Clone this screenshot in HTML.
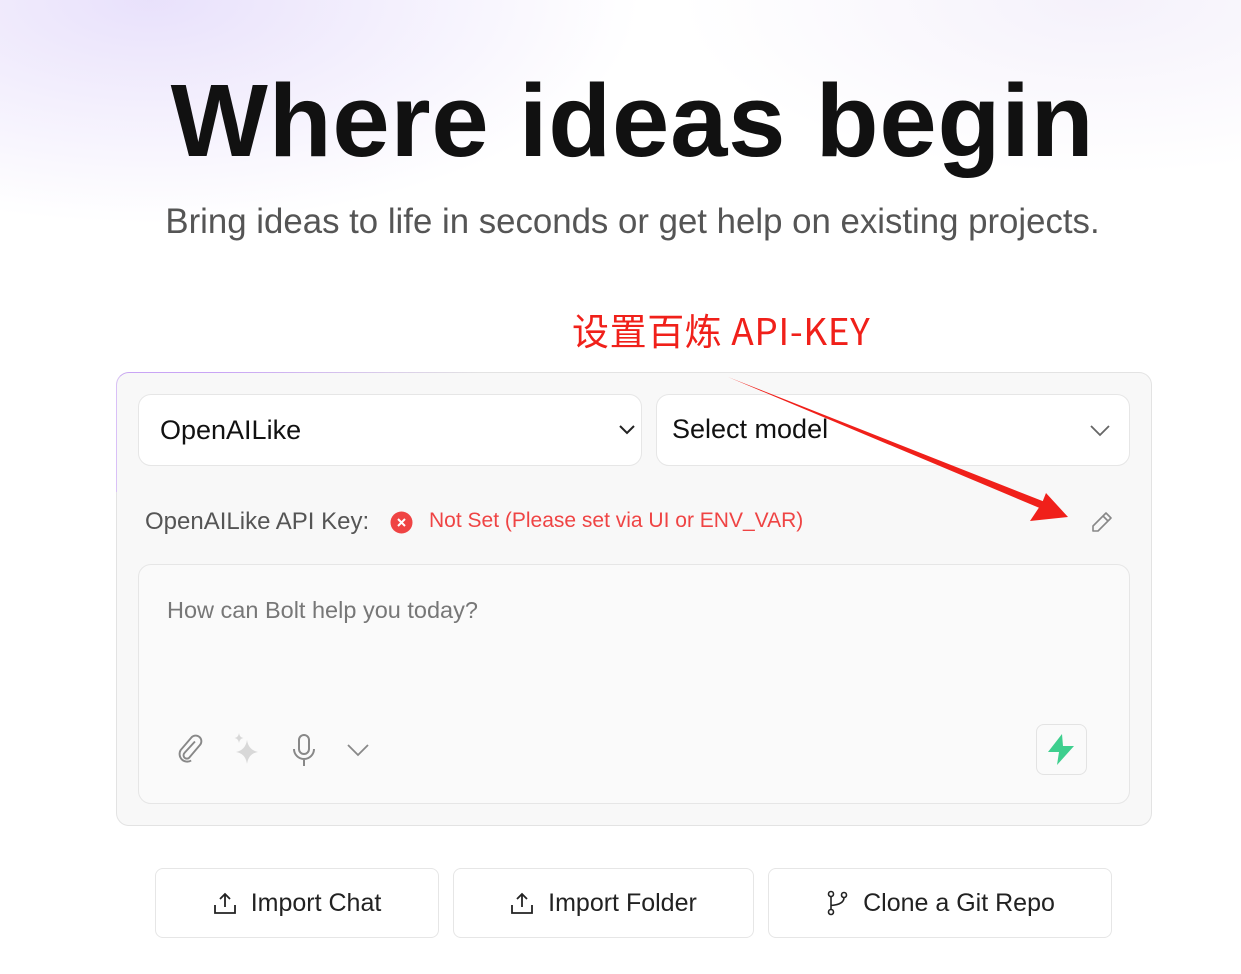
<!DOCTYPE html>
<html><head><meta charset="utf-8"><style>
*{margin:0;padding:0;box-sizing:border-box}
body{width:1241px;height:974px;overflow:hidden;font-family:"Liberation Sans","Noto Sans CJK SC",sans-serif;background:#fff;position:relative}
.bg{position:absolute;inset:0;background:radial-gradient(ellipse 700px 320px at 150px 0px,rgba(225,215,250,.75),rgba(255,255,255,0) 70%),radial-gradient(ellipse 600px 250px at 1100px 0px,rgba(238,232,248,.6),rgba(255,255,255,0) 70%)}
.abs{position:absolute}
h1{position:absolute;left:12px;width:1241px;text-align:center;top:62px;font-size:103px;font-weight:bold;color:#111;letter-spacing:0.8px}
.sub{left:12px;width:1241px;text-align:center;top:202px;font-size:34.8px;color:#555}
.ann{left:572px;top:306px;font-size:37px;color:#f0201a;font-family:"Noto Sans CJK SC","Liberation Sans",sans-serif;line-height:46px;letter-spacing:0.6px}
.box{left:116px;top:372px;width:1036px;height:454px;background:#f8f8f8;border:1px solid #e3e3e3;border-radius:13px}
.glow{left:116px;top:372px;width:400px;height:120px;border-top:1.5px solid #c9a5f5;border-left:1.5px solid #d9c0f7;border-top-left-radius:13px;-webkit-mask:linear-gradient(135deg,#000 20%,transparent 70%)}
.sel{background:#fff;border:1px solid #e6e6e6;border-radius:13px;height:72px;top:394px;font-size:27px;color:#111;padding-left:21px;line-height:70px}
.key{left:145px;top:508px;font-size:24px;color:#555}
.err{left:429px;top:509px;font-size:21px;color:#ef4444}
.ta{left:138px;top:564px;width:992px;height:240px;background:#fafafa;border:1px solid #e6e6e6;border-radius:13px}
.ph{left:167px;top:597px;font-size:23.5px;color:#777}
.btn{top:868px;height:70px;background:#fff;border:1px solid #e6e6e6;border-radius:8px;font-size:25px;color:#222;display:flex;align-items:center;justify-content:center;gap:14px}
</style></head><body>
<div class="bg"></div>
<h1>Where ideas begin</h1>
<div class="abs sub">Bring ideas to life in seconds or get help on existing projects.</div>
<div class="abs ann">设置百炼 API-KEY</div>
<div class="abs box"></div>
<div class="abs glow"></div>
<div class="abs sel" style="left:138px;width:504px">OpenAILike
<svg class="abs" style="right:5px;top:28px" width="18" height="12" viewBox="0 0 18 12"><path d="M2 3l7 7 7-7" fill="none" stroke="#222" stroke-width="2"/></svg></div>
<div class="abs sel" style="left:656px;width:474px;padding-left:15px;line-height:68px">Select model
<svg class="abs" style="right:18px;top:28px" width="22" height="14" viewBox="0 0 22 14"><path d="M2 3l9 9 9-9" fill="none" stroke="#666" stroke-width="1.8"/></svg></div>
<div class="abs key">OpenAILike API Key:</div>
<svg class="abs" style="left:390px;top:511px" width="23" height="23" viewBox="0 0 23 23"><circle cx="11.5" cy="11.5" r="11" fill="#ef4444"/><path d="M8 8l7 7M15 8l-7 7" stroke="#fff" stroke-width="2"/></svg>
<div class="abs err">Not Set (Please set via UI or ENV_VAR)</div>
<svg class="abs" style="left:1090px;top:510px" width="24" height="24" viewBox="0 0 24 24"><path d="M16 3l5 5L8 21H3v-5z M13 6l5 5" fill="none" stroke="#888" stroke-width="1.6" stroke-linejoin="round"/></svg>
<div class="abs ta"></div>
<div class="abs ph">How can Bolt help you today?</div>
<svg class="abs" style="left:176px;top:734px" width="30" height="32" viewBox="0 0 30 32"><path d="M21 10L10 22a3.5 3.5 0 0 0 5 5l11-13a6 6 0 0 0-8.5-8.5L6 19a8 8 0 0 0 11 11" fill="none" stroke="#888" stroke-width="2" transform="translate(-1,-2) scale(.95)"/></svg>
<svg class="abs" style="left:230px;top:732px" width="34" height="36" viewBox="0 0 34 36"><path d="M17 8q1.5 10 11 12q-9.5 1.5-11 12q-1.5-10.5-11-12q9.5-2 11-12z" fill="#d8d8d8"/><path d="M9 1q.6 4.5 4.5 5q-3.9.6-4.5 5q-.6-4.4-4.5-5q3.9-.5 4.5-5z" fill="#d8d8d8"/></svg>
<svg class="abs" style="left:290px;top:733px" width="28" height="34" viewBox="0 0 28 34"><rect x="9" y="2" width="10" height="19" rx="5" fill="none" stroke="#888" stroke-width="2"/><path d="M4 16a10 10 0 0 0 20 0M14 26v7" fill="none" stroke="#888" stroke-width="2"/></svg>
<svg class="abs" style="left:346px;top:742px" width="24" height="16" viewBox="0 0 24 16"><path d="M2 3l10 10 10-10" fill="none" stroke="#888" stroke-width="1.8"/></svg>
<div class="abs" style="left:1036px;top:724px;width:51px;height:51px;border:1px solid #e3e3e3;border-radius:8px;background:#fafafa"></div>
<svg class="abs" style="left:1045px;top:733px" width="32" height="33" viewBox="0 0 32 33"><path d="M17 1L3 19h11l-2 13L29 13H18z" fill="#3ecf8e"/></svg>
<div class="abs btn" style="left:155px;width:284px"><svg width="24" height="24" viewBox="0 0 24 24"><path d="M12 16V3M7 8l5-5 5 5M2 14v8h20v-8" fill="none" stroke="#222" stroke-width="1.8"/></svg>Import Chat</div>
<div class="abs btn" style="left:453px;width:301px"><svg width="24" height="24" viewBox="0 0 24 24"><path d="M12 16V3M7 8l5-5 5 5M2 14v8h20v-8" fill="none" stroke="#222" stroke-width="1.8"/></svg>Import Folder</div>
<div class="abs btn" style="left:768px;width:344px"><svg width="24" height="26" viewBox="0 0 24 26"><circle cx="6" cy="4" r="2.5" fill="none" stroke="#222" stroke-width="1.6"/><circle cx="6" cy="22" r="2.5" fill="none" stroke="#222" stroke-width="1.6"/><circle cx="19" cy="5" r="2.5" fill="none" stroke="#222" stroke-width="1.6"/><path d="M6 6.5v13M19 7.5q0 7-13 8" fill="none" stroke="#222" stroke-width="1.6"/></svg>Clone a Git Repo</div>
<svg class="abs" style="left:0;top:0" width="1241" height="974"><polygon points="728,377 1045,502 1042,509" fill="#f0201a"/><polygon points="1068,517 1030,521 1042,503 1046,493" fill="#f0201a"/></svg>
</body></html>
